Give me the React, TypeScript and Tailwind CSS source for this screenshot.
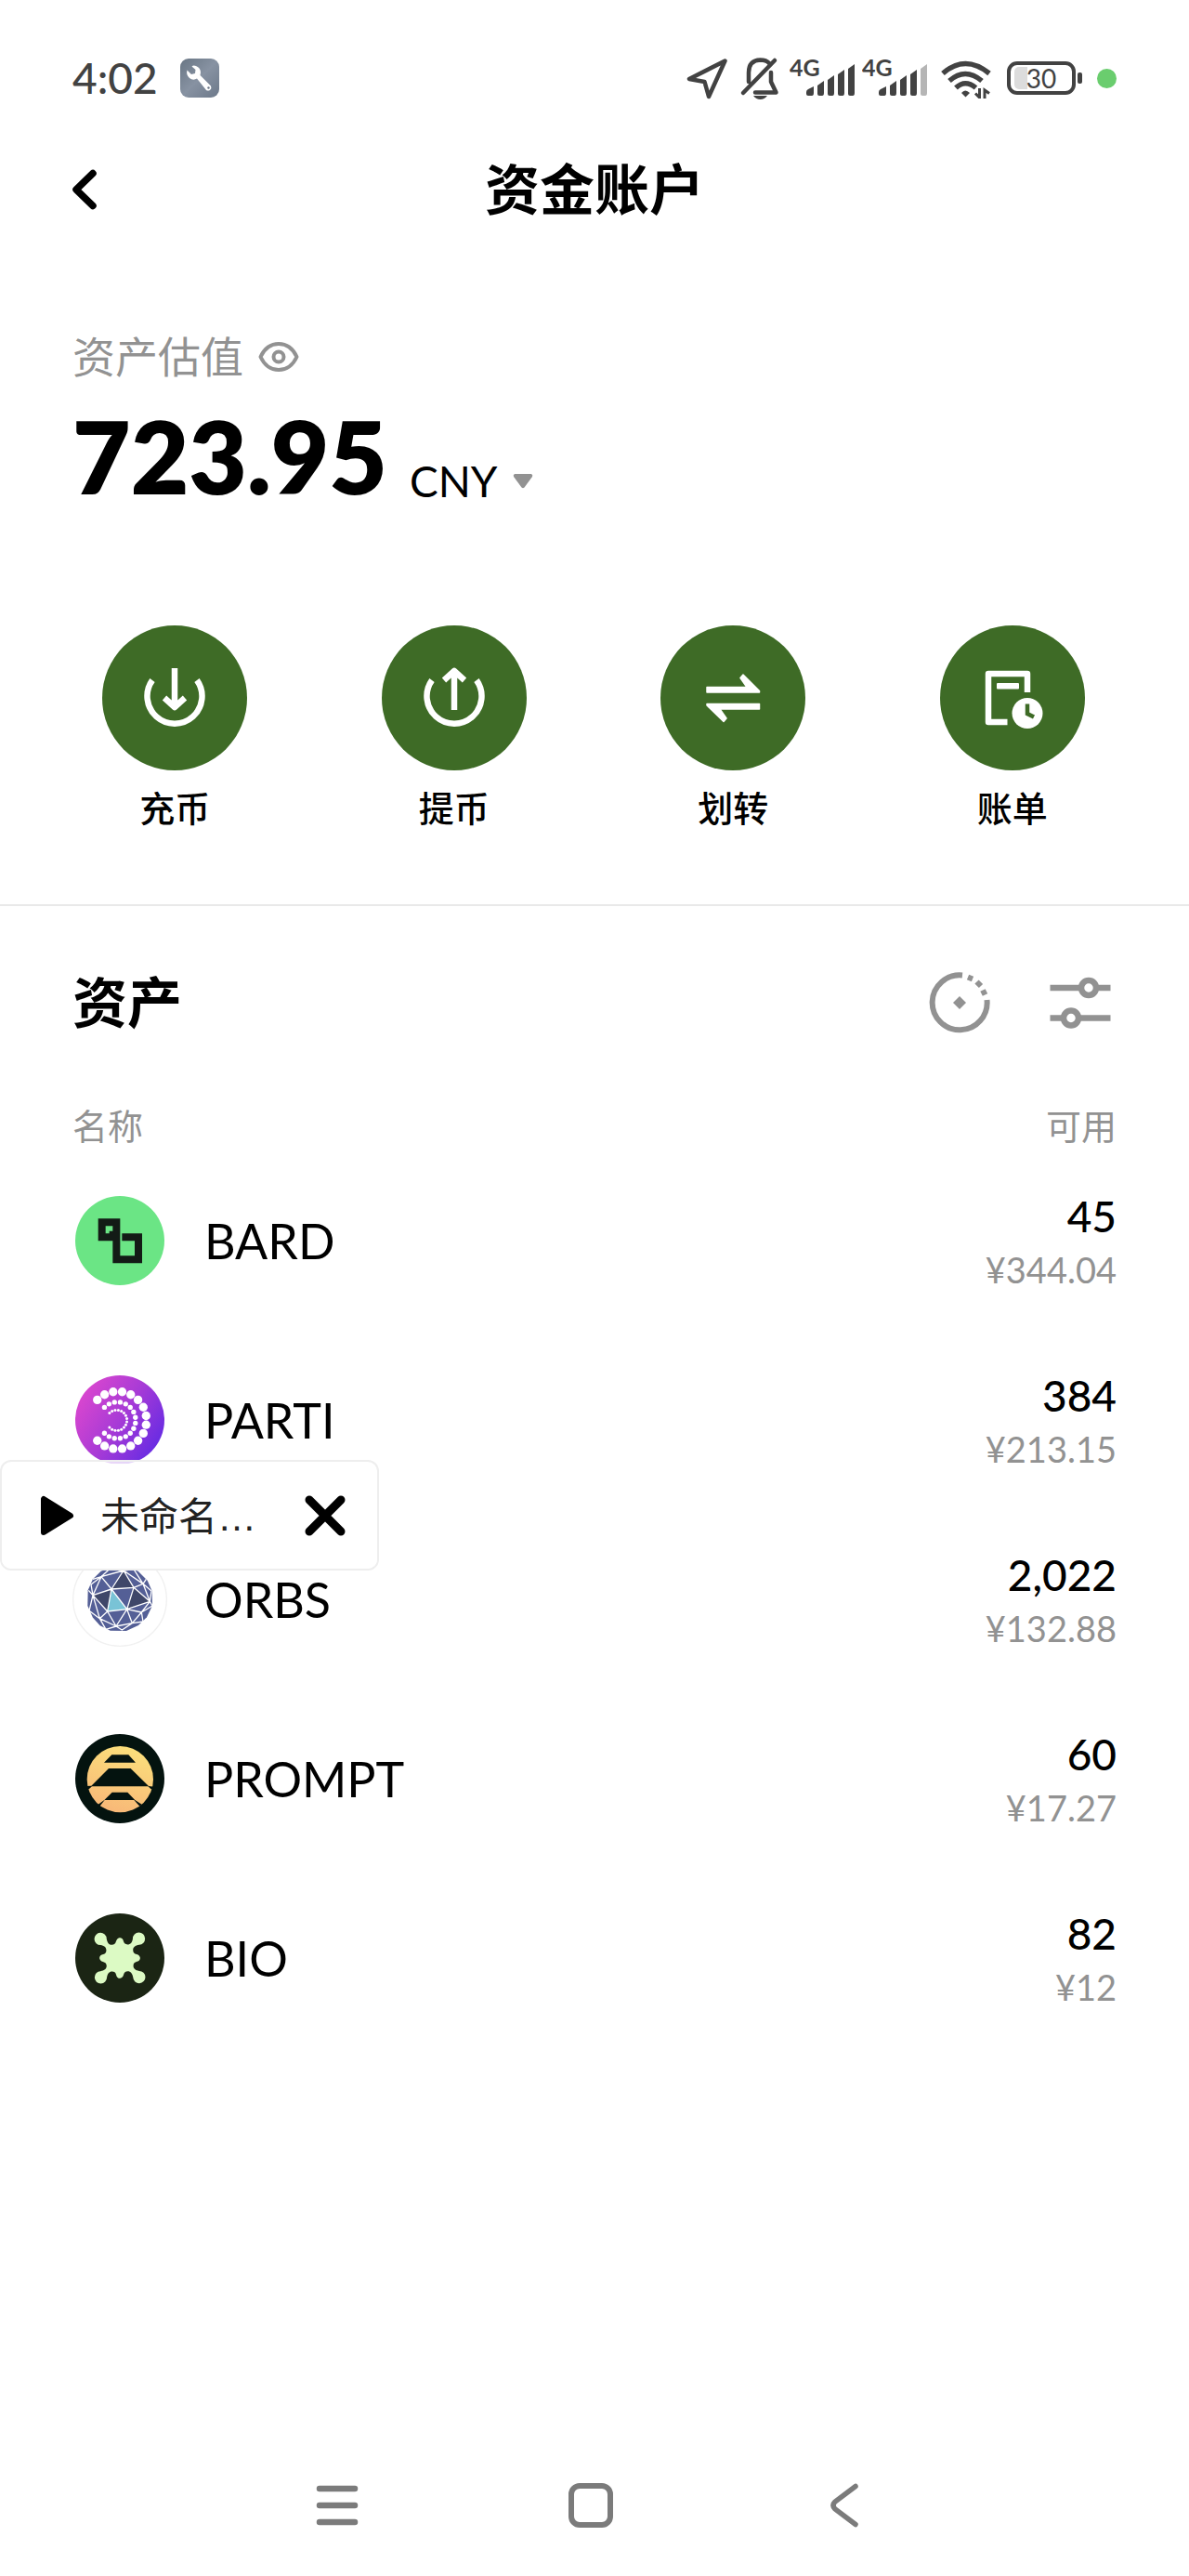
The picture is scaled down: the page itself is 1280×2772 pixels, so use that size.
import React, { useState } from 'react';

interface Asset {
  symbol: string;
  amount: string;
  value: string;
  logo: React.ReactNode;
}

const RING_STEPS = Array.from({ length: 16 }, (_, i) => ((-135 + i * 18) * Math.PI) / 180);

const DotRing = ({ cx, radius, dot }: { cx: number; radius: number; dot: number }) => (
  <>
    {RING_STEPS.map((a) => (
      <circle key={a} cx={cx + radius * Math.cos(a)} cy={145 + radius * Math.sin(a)} r={dot} fill="#fff" />
    ))}
  </>
);

const BardLogo = () => (
  <svg viewBox="0 0 288 288" className="size-24" aria-hidden="true">
    <circle cx="144" cy="144" r="144" fill="#6be585" />
    <path
      fill="#131b16"
      fillRule="evenodd"
      d="M74 73h71v120h47v-48h-41v-24h65v96h-95V97H98v24h12v-8h11v32H74Z"
    />
  </svg>
);

const PartiLogo = () => (
  <svg viewBox="0 0 288 288" className="size-24" aria-hidden="true">
    <defs>
      <linearGradient id="parti" x1="0.05" y1="0.25" x2="0.9" y2="0.8">
        <stop offset="0" stopColor="#d846cf" />
        <stop offset="0.5" stopColor="#a83bd6" />
        <stop offset="1" stopColor="#6a2ce2" />
      </linearGradient>
    </defs>
    <circle cx="144" cy="144" r="144" fill="url(#parti)" />
    <DotRing cx={137} radius={93} dot={14} />
    <DotRing cx={136} radius={59} dot={8} />
    <DotRing cx={134} radius={33} dot={4.5} />
  </svg>
);

const OrbsLogo = () => (
  <svg viewBox="0 0 306 306" className="size-[102px]" aria-hidden="true">
    <circle cx="153" cy="153" r="151" fill="#fff" stroke="#f0f0f0" strokeWidth="4" />
    <path
      fill="#545f96"
      d="M126 50 178 49 212 62 242 92 257 126 258 173 240 211 213 237 174 255 122 254 89 238 66 212 49 174 50 124 66 88 92 62Z"
    />
    <path fill="#3f4769" d="M165 60 198 115 126 120ZM66 140 126 120 113 192ZM198 115 250 160 176 185Z" />
    <path fill="#79c3d6" d="M126 120 176 185 113 192Z" />
    <path
      fill="none"
      stroke="#fff"
      strokeWidth="4"
      strokeLinejoin="round"
      d="M126 120 93 80 165 60ZM126 120 198 115 165 60 228 103 198 115 250 160 228 103M126 120 66 140 93 80M126 120 176 185 198 115M126 120 113 192 176 185 250 160 223 195 176 185M66 140 113 192 88 215 66 140 54 190 88 215 141 240 113 192M176 185 141 240 193 230 176 185M193 230 223 195 228 225 193 230 160 252 141 240 108 250 88 215M165 60 150 48M165 60 198 56 228 103 238 88M93 80 120 55 165 60M93 80 66 88M66 140 52 124M66 140 60 105 93 80M228 103 255 126 250 160 258 174 223 195"
    />
  </svg>
);

const PromptLogo = () => (
  <svg viewBox="0 0 288 288" className="size-24" aria-hidden="true">
    <defs>
      <linearGradient id="prompt" x1="0.7" y1="0" x2="0.4" y2="1">
        <stop offset="0" stopColor="#fbe07b" />
        <stop offset="1" stopColor="#f8b878" />
      </linearGradient>
    </defs>
    <circle cx="144" cy="144" r="144" fill="#04130f" />
    <circle cx="145" cy="146" r="107" fill="url(#prompt)" />
    <path
      fill="#04130f"
      d="M118 67h54l23 25H93ZM108 111h71l58 57 18 2v6l-10 2-10-9H54l-10 9-8-4v-6l16-1ZM119 188h50l24 25 22 14-7 6-18-20H95l-16 20-7-4 22-16Z"
    />
  </svg>
);

const BIO_ARM =
  'M144 79C152 79 156 84 157 91 159 98 163 101 170 101 180 101 185 94 187 82A20 20 0 1 1 208 102C195 104 188 110 188 119 188 127 192 131 200 133 206 135 211 139 211 146L144 146Z';

const BioLogo = () => (
  <svg viewBox="0 0 290 290" className="size-24" aria-hidden="true">
    <circle cx="145" cy="145" r="145" fill="#1b2514" />
    <g fill="#dcfac4">
      <path d={BIO_ARM} />
      <path d={BIO_ARM} transform="rotate(90 145 145)" />
      <path d={BIO_ARM} transform="rotate(180 145 145)" />
      <path d={BIO_ARM} transform="rotate(270 145 145)" />
    </g>
  </svg>
);

const assets: Asset[] = [
  { symbol: 'BARD', amount: '45', value: '¥344.04', logo: <BardLogo /> },
  { symbol: 'PARTI', amount: '384', value: '¥213.15', logo: <PartiLogo /> },
  { symbol: 'ORBS', amount: '2,022', value: '¥132.88', logo: <OrbsLogo /> },
  { symbol: 'PROMPT', amount: '60', value: '¥17.27', logo: <PromptLogo /> },
  { symbol: 'BIO', amount: '82', value: '¥12', logo: <BioLogo /> },
];

const actions = [
  {
    label: '充币',
    icon: (
      <g fill="none" stroke="#fff" strokeWidth="6.5" strokeLinejoin="round">
        <path d="M54 59A29.5 29.5 0 1 0 102 59" />
        <path d="M78 46V88M67 78 78 88 89 78" />
      </g>
    ),
  },
  {
    label: '提币',
    icon: (
      <g fill="none" stroke="#fff" strokeWidth="6.5" strokeLinejoin="round">
        <path d="M54 59A29.5 29.5 0 1 0 102 59" />
        <path d="M78 91V49M67 59 78 49 89 59" />
      </g>
    ),
  },
  {
    label: '划转',
    icon: (
      <path
        fill="#fff"
        stroke="#fff"
        strokeWidth="1.5"
        strokeLinejoin="round"
        d="M50 66.500H93L86 56.500 89 53 106.500 70.500V72H50ZM106.500 90H64L71 100 68 103.500 50 86V84.500H106.500Z"
      />
    ),
  },
  {
    label: '账单',
    icon: (
      <>
        <path fill="none" stroke="#fff" strokeWidth="6.500" strokeLinejoin="round" d="M94 72V52H52V104H72.500" />
        <rect x="61" y="62" width="24" height="6.500" rx="1" fill="#fff" />
        <circle cx="94" cy="94.500" r="16.500" fill="#fff" />
        <path fill="none" stroke="#3e6b26" strokeWidth="4.500" d="M94 84.500V95L101 98.500" />
      </>
    ),
  },
];

const Signal = ({ weak = false }: { weak?: boolean }) => (
  <svg viewBox="0 -10 70 64" className="w-[70px] h-16" role="img" aria-label="4G">
    <text x="0" y="20" className="font-bold text-[25px]" fill="#424242">
      4G
    </text>
    <g fill="#424242">
      <path d="M18 37Q18 35 20 34L26 31V38Q26 41 24 41H20Q18 41 18 39Z" />
      <path d="M30 30 37 25V38Q37 41 35 41H32Q30 41 30 39Z" />
      <path d="M41 24 48 19V38Q48 41 46 41H43Q41 41 41 39Z" />
      <path d="M52 18 59 13V38Q59 41 57 41H54Q52 41 52 39Z" />
    </g>
    <path d="M63 12 70 7V38Q70 41 68 41H65Q63 41 63 39Z" fill={weak ? '#b5b5b5' : '#424242'} />
  </svg>
);

const StatusBar = () => (
  <div className="flex items-center h-11 mt-[62px] px-[78px] text-[#424242]">
    <span className="text-[46px] leading-[44px] font-medium">4:02</span>
    <svg viewBox="0 0 42 42" className="size-[42px] ml-6" aria-hidden="true">
      <defs>
        <linearGradient id="tool" x1="0" y1="0" x2="1" y2="1">
          <stop offset="0" stopColor="#697684" />
          <stop offset="0.5" stopColor="#8792a2" />
          <stop offset="1" stopColor="#6c7889" />
        </linearGradient>
      </defs>
      <rect width="42" height="42" rx="9" fill="url(#tool)" />
      <path
        fill="#fff"
        d="M7.500 12.500 12 17 16 16 16.500 12 12.500 8.500Q14 7 17 8 22 10 22 15L21.500 18 33 29.500A3.500 3.500 0 0 1 28 34L18 21.500Q14 24 10 21 6 17.500 7.500 12.500Z"
      />
      <circle cx="30.500" cy="31.500" r="1.200" fill="#6c7889" />
    </svg>

    <div className="flex items-center ml-auto">
      <svg viewBox="0 0 46 46" className="size-[46px]" fill="none" stroke="currentColor" strokeWidth="4.500" strokeLinejoin="round" aria-hidden="true">
        <path d="M42.500 4.500 4 24 20.500 27 25 43Z" />
      </svg>
      <svg viewBox="0 0 46 46" className="size-[46px] ml-3" aria-hidden="true">
        <path
          fill="none"
          stroke="currentColor"
          strokeWidth="4.500"
          strokeLinecap="round"
          strokeLinejoin="round"
          d="M4 39 38 4M10 27V17Q10 4 22.500 3.500 29 3.500 32 7M34 17V27L39.500 38.500H17"
        />
        <path fill="currentColor" d="M15 42H30Q27 46 22.500 46T15 42Z" />
      </svg>
      <div className="flex ml-2 gap-2">
        <Signal />
        <Signal weak />
      </div>
      <svg viewBox="0 0 54 44" className="w-[54px] h-11 ml-[15px]" aria-hidden="true">
        <g fill="none" stroke="currentColor" strokeWidth="5.500">
          <path d="M2 17Q26 -4 52 17" />
          <path d="M9 25Q26 10 44 25" />
          <path d="M16 32.500Q26 23 37.500 32.500" />
        </g>
        <path fill="currentColor" d="M22 38Q26 33 31 38L26.500 42.500Z" />
        <path fill="none" stroke="currentColor" strokeWidth="3" d="M41.500 33V43L37 38.500M47 44V35L52 38.500" />
      </svg>
      <div className="flex items-center ml-[17px]">
        <div className="relative flex items-center justify-center w-[74px] h-9 rounded-[11px] border-4 border-[#424242]">
          <span className="absolute left-1 top-[2px] bottom-[2px] w-[14px] rounded-l-[5px] bg-[#dcdcdc]" />
          <span className="relative text-[28px] leading-7">30</span>
        </div>
        <span className="w-[5px] h-3 ml-[2px] rounded-[2px] bg-[#424242]" />
      </div>
      <span className="size-[21px] ml-4 rounded-full bg-[#6acd6e]" />
    </div>
  </div>
);

const FloatingPlayer = ({ onClose }: { onClose: () => void }) => (
  <div className="absolute left-0 top-[1571px] flex items-center w-[408px] h-[119px] rounded-[12px] border-2 border-[#eeeeee] bg-white/80 z-10">
    <div className="absolute inset-x-0 bottom-0 top-[2px] rounded-[10px] bg-white/95 -z-10" />
    <button type="button" aria-label="播放" className="ml-10">
      <svg viewBox="0 0 40 48" className="w-10 h-12" aria-hidden="true">
        <path d="M5 6V42L34 24Z" stroke="#000" strokeWidth="6" strokeLinejoin="round" />
      </svg>
    </button>
    <span className="ml-[26px] pt-1 font-['Liberation_Sans','Noto_Sans_CJK_SC',sans-serif] text-[42px] leading-[52px] text-[#222222] whitespace-nowrap">
      未命名…
    </span>
    <button type="button" aria-label="关闭" onClick={onClose} className="ml-auto mr-[34px]">
      <svg viewBox="0 0 44 44" className="size-11" stroke="#000" strokeWidth="9" strokeLinecap="round" aria-hidden="true">
        <path d="M5 5 39 39M39 5 5 39" />
      </svg>
    </button>
  </div>
);

export default function App() {
  const [playerOpen, setPlayerOpen] = useState(true);
  const [hidden, setHidden] = useState(false);

  return (
    <div className="relative flex flex-col min-h-screen bg-white text-black font-['Lato','Noto_Sans_CJK_SC',sans-serif]">
      <StatusBar />

      <header className="grid grid-cols-[1fr_auto_1fr] items-center h-20 mt-[58px] px-[68px]">
        <button type="button" aria-label="返回" className="justify-self-start">
          <svg viewBox="0 0 40 48" className="w-10 h-12" fill="none" stroke="#000" strokeWidth="7.500" strokeLinecap="round" strokeLinejoin="round" aria-hidden="true">
            <path d="M32 6.500 14 24 32 41.500" />
          </svg>
        </button>
        <h1 className="text-[59px] leading-[72px] font-bold">资金账户</h1>
      </header>

      {/* 资产估值 */}
      <section className="mt-28 px-[78px]">
        <div className="flex items-center h-14 text-[#929292]">
          <span className="text-[46px] leading-[56px]">资产估值</span>
          <button type="button" aria-label="隐藏金额" onClick={() => setHidden(!hidden)} className="ml-4">
            <svg viewBox="0 0 44 34" className="w-11 h-[34px]" fill="none" stroke="currentColor" strokeWidth="4" strokeLinejoin="round" aria-hidden="true">
              <path d="M2.500 17Q9 3 22 3T41.500 17Q35 31 22 31T2.500 17Z" />
              <circle cx="22" cy="17" r="5.500" />
            </svg>
          </button>
        </div>
        <div className="flex items-end mt-[22px]">
          <span className="text-[108px] leading-[112px] font-extrabold">{hidden ? '******' : '723.95'}</span>
          <button type="button" className="flex items-center ml-6 text-[46px] leading-[56px]">
            CNY
            <svg viewBox="0 0 22 16" className="w-[22px] h-4 ml-4" fill="#929292" aria-hidden="true">
              <path d="M2 0H20Q22 1 21 3L12.500 14.500Q11 16 9.500 14.500L1 3Q0 1 2 0Z" />
            </svg>
          </button>
        </div>
      </section>

      <nav className="grid grid-cols-4 mt-[127px] pl-[38px] pr-10">
        {actions.map((action) => (
          <button key={action.label} type="button" className="flex flex-col items-center gap-4">
            <svg viewBox="0 0 156 156" className="size-[156px] rounded-full bg-[#3e6b26]" aria-hidden="true">
              {action.icon}
            </svg>
            <span className="text-[38px] leading-[48px] font-medium">{action.label}</span>
          </button>
        ))}
      </nav>

      <hr className="mt-20 border-t-2 border-[#e9e9e9]" />

      {/* 资产列表 */}
      <section className="mt-[68px] px-[78px]">
        <div className="flex items-center h-[72px]">
          <h2 className="text-[59px] leading-[72px] font-bold">资产</h2>
          <button type="button" aria-label="小额兑换" className="ml-auto">
            <svg viewBox="0 0 66 66" className="size-[66px]" fill="none" stroke="#929292" strokeWidth="6" aria-hidden="true">
              <path d="M36 3.500A29.500 29.500 0 1 0 62.500 30" />
              <path d="M42 5.500 47 7.500M51.500 10.500 56 15M58 19.500 60.500 24.500" />
              <path d="M33 26 40 33 33 40 26 33Z" fill="#929292" stroke="none" />
            </svg>
          </button>
          <button type="button" aria-label="筛选" className="ml-16 mr-[6px]">
            <svg viewBox="0 0 66 66" className="size-[66px]" fill="none" stroke="#929292" strokeWidth="6.500" aria-hidden="true">
              <path d="M0.500 17H33M51 17H65.500M0.500 49.500H14M32 49.500H65.500" />
              <circle cx="42" cy="17" r="8" />
              <circle cx="23" cy="49.500" r="8" />
            </svg>
          </button>
        </div>

        <table className="w-full mt-[69px]">
          <thead>
            <tr className="h-[54px] text-[38px] leading-[54px] text-[#929292]">
              <th scope="col" className="p-0 text-left font-normal">名称</th>
              <th scope="col" className="p-0 text-right font-normal">可用</th>
            </tr>
          </thead>
          <tbody>
            {assets.map((asset) => (
              <tr key={asset.symbol} className="h-[193px]">
                <td className="p-0">
                  <div className="flex items-center">
                    <div className="flex justify-center w-[102px]">{asset.logo}</div>
                    <span className="ml-10 text-[52px] leading-[64px]">{asset.symbol}</span>
                  </div>
                </td>
                <td className="p-0 pt-[6px] text-right">
                  <div className="text-[46px] leading-[56px] font-medium">{asset.amount}</div>
                  <div className="text-[38px] leading-[58px] text-[#929292]">{asset.value}</div>
                </td>
              </tr>
            ))}
          </tbody>
        </table>
      </section>

      {/* 系统导航栏 */}
      <footer className="flex items-center justify-center gap-[226px] h-[152px] mt-auto pr-2">
        <button type="button" aria-label="最近任务">
          <svg viewBox="0 0 46 48" className="w-[46px] h-12" stroke="#7b7b7b" strokeWidth="6.500" strokeLinecap="round" aria-hidden="true">
            <path d="M4 6H42M4 24H42M4 42H42" />
          </svg>
        </button>
        <button type="button" aria-label="主屏幕">
          <svg viewBox="0 0 48 48" className="size-12" fill="none" stroke="#7b7b7b" strokeWidth="6" aria-hidden="true">
            <rect x="3" y="3" width="42" height="42" rx="9" />
          </svg>
        </button>
        <button type="button" aria-label="返回上一页">
          <svg viewBox="0 0 46 48" className="w-[46px] h-12" fill="none" stroke="#7b7b7b" strokeWidth="5.500" strokeLinecap="round" aria-hidden="true">
            <path d="M35 3.500 13 20Q9 24 13 28L35 44.500" />
          </svg>
        </button>
      </footer>

      {playerOpen && <FloatingPlayer onClose={() => setPlayerOpen(false)} />}
    </div>
  );
}
